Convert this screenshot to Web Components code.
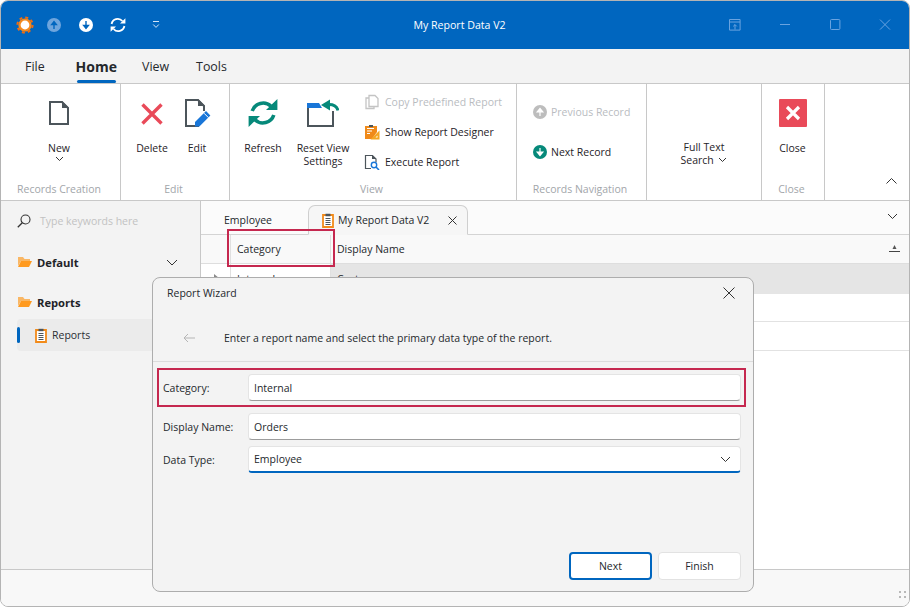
<!DOCTYPE html>
<html>
<head>
<meta charset="utf-8">
<title>My Report Data V2</title>
<style>
  html, body { margin: 0; padding: 0; background: #fff; }
  body { font: 10.5px "Open Sans", "Liberation Sans", sans-serif; color: #1f2328; }
  svg { display: block; }
</style>
</head>
<body>

<app-window>
  <title-bar slot="top" caption="My Report Data V2">
    <svg slot="left" width="18" height="18" viewBox="0 0 18 18" style="margin-right:-4px">
      <circle cx="9" cy="9" r="7.6" fill="none" stroke="#f26c0d" stroke-width="2" stroke-dasharray="3 2.97"/>
      <circle cx="9" cy="9" r="6.6" fill="#f58a1f"/>
      <circle cx="9" cy="9" r="4.4" fill="#fff"/>
    </svg>
    <svg slot="left" width="16" height="16" viewBox="0 0 16 16">
      <circle cx="8" cy="8" r="7" fill="#6ea5dd"/>
      <path d="M8 12V6M5.6 7.6 8 4.6l2.4 3z" fill="#0066bf" stroke="#0066bf" stroke-width="1.4"/>
    </svg>
    <svg slot="left" width="16" height="16" viewBox="0 0 16 16">
      <circle cx="8" cy="8" r="7" fill="#fff"/>
      <path d="M8 4v6M5.6 8.4 8 11.4l2.4-3z" fill="#0066bf" stroke="#0066bf" stroke-width="1.4"/>
    </svg>
    <svg slot="left" width="16" height="16" viewBox="0 0 16 16">
      <path d="M1.6 7A6.2 6.2 0 0 1 12.4 4M14.4 9A6.2 6.2 0 0 1 3.600 12" fill="none" stroke="#fff" stroke-width="1.8"/>
      <path d="M10 6.600h5.400V1.200zM6 9.400H.6v5.400z" fill="#fff"/>
    </svg>
    <svg slot="left" width="16" height="16" viewBox="0 0 16 16" style="margin-left:6px">
      <path d="M5 4.500h6M5.200 7.500 8 10.400l2.800-2.900" fill="none" stroke="#d5e5f6" stroke-width="1"/>
    </svg>

    <svg slot="right" width="12" height="12" viewBox="0 0 12 12">
      <path d="M.5.5h10.600v10.600H.5zM.5 3h10.600M6 10.500V5.600M4.200 7.400 6 5.600l1.800 1.800" fill="none" stroke="#69a3e0"/>
    </svg>
    <svg slot="right" width="12" height="12" viewBox="0 0 12 12"><path d="M1 5.500h10" stroke="#69a3e0"/></svg>
    <svg slot="right" width="12" height="12" viewBox="0 0 12 12"><rect x="1.500" y=".5" width="9.400" height="10" rx="1" fill="none" stroke="#69a3e0"/></svg>
    <svg slot="right" width="12" height="12" viewBox="0 0 12 12"><path d="M1 .6 11 10.600M11 .6 1 10.600" stroke="#69a3e0"/></svg>
  </title-bar>

  <menu-tabs slot="top">
    <menu-tab style="margin-left:24px">File</menu-tab>
    <menu-tab active style="margin-left:31px">Home</menu-tab>
    <menu-tab style="margin-left:25px">View</menu-tab>
    <menu-tab style="margin-left:27px">Tools</menu-tab>
  </menu-tabs>

  <ribbon-bar slot="top">
    <ribbon-group label="Records Creation" style="width:120px">
      <large-button style="width:116px">
        <svg slot="icon" width="24" height="32" viewBox="0 0 24 32">
          <path d="M3 5h12l6 6v16H3z" fill="#fff" stroke="#4c555b" stroke-width="2"/>
          <path d="M15 4l7 7h-7z" fill="#4c555b"/>
        </svg>
        New
        <svg slot="after" width="9" height="6" viewBox="0 0 9 6"><path d="M1 1l3.500 3.500L8 1" fill="none" stroke="#333"/></svg>
      </large-button>
    </ribbon-group>

    <ribbon-group label="Edit" style="width:109px">
      <large-button style="width:44px;margin-left:9px">
        <svg slot="icon" width="24" height="32" viewBox="0 0 24 32">
          <path d="M2.500 7.500l19 19M21.500 7.500l-19 19" stroke="#e94a59" stroke-width="3.400"/>
        </svg>
        Delete
      </large-button>
      <large-button style="width:44px;margin-left:1px">
        <svg slot="icon" width="28" height="32" viewBox="0 0 28 32">
          <path d="M16 29H3V3h12l6 6v5" fill="none" stroke="#4c555b" stroke-width="2"/>
          <path d="M15 2l7 7h-7z" fill="#4c555b"/>
          <path d="M12 29.500v-4.400l11-11 4.400 4.400-11 11z" fill="#1976d8"/>
          <path d="M21 16.200l4.400 4.400" stroke="#fff"/>
        </svg>
        Edit
      </large-button>
    </ribbon-group>

    <ribbon-group label="View" style="width:287px">
      <large-button style="width:46px;margin-left:10px">
        <svg slot="icon" width="30" height="32" viewBox="0 0 30 32">
          <path d="M4.200 14A11.500 11.500 0 0 1 23 9.200M25.800 18A11.500 11.500 0 0 1 7 22.800" fill="none" stroke="#06897a" stroke-width="3.600"/>
          <path d="M18 13h11.400V2zM12 19H.6v11z" fill="#06897a"/>
        </svg>
        Refresh
      </large-button>
      <large-button style="width:66px;margin-left:4px">
        <svg slot="icon" width="32" height="32" viewBox="0 0 32 32">
          <path d="M1 11v18h25V14" fill="none" stroke="#4c555b" stroke-width="2"/>
          <path d="M0 6h12l3 5H0z" fill="#1976d8"/>
          <path d="M22 7.500c5 0 8 2 9 6" fill="none" stroke="#06897a" stroke-width="3"/>
          <path d="M23 2.500v11L14 8z" fill="#06897a"/>
        </svg>
        Reset View<br>Settings
      </large-button>
      <small-stack gap="30" style="margin-left:8px;margin-top:10px">
        <small-button disabled>
          <svg slot="icon" width="16" height="16" viewBox="0 0 16 16">
            <path d="M5 1.500h6l3 3v8H5zM5 4H2v10.500h8v-2" fill="#fff" stroke="#c4c4c4"  stroke-width="1.300"/>
          </svg>
          Copy Predefined Report
        </small-button>
        <small-button>
          <svg slot="icon" width="16" height="16" viewBox="0 0 16 16">
            <path d="M1 2h12v6L8 15H1z" fill="#f08a1a"/>
            <path d="M3 4.500h7M3 7h5M3 9.500h3" stroke="#fff" stroke-width="1.200"/>
            <path d="M5 1h4v2H5z" fill="#4c555b"/>
            <path d="M15.500 6.500v9h-9z" fill="#f5a623"/>
            <path d="M13.500 11.500v2h-2z" fill="#fff"/>
          </svg>
          Show Report Designer
        </small-button>
        <small-button>
          <svg slot="icon" width="16" height="16" viewBox="0 0 16 16">
            <path d="M7 14.500H1.500v-13h7l3.500 3.500v3" fill="none" stroke="#4c555b" stroke-width="1.200"/>
            <path d="M8 1l4 4H8z" fill="#4c555b"/>
            <circle cx="10" cy="11" r="2.700" fill="none" stroke="#1976d8" stroke-width="1.400"/>
            <path d="M12 13l3 3" stroke="#1976d8" stroke-width="1.600"/>
          </svg>
          Execute Report
        </small-button>
      </small-stack>
    </ribbon-group>

    <ribbon-group label="Records Navigation" style="width:130px">
      <small-stack gap="40" style="margin-left:15px;margin-top:20px">
        <small-button disabled narrow>
          <svg slot="icon" width="16" height="16" viewBox="0 0 16 16">
            <circle cx="8" cy="8" r="7" fill="#bdbdbd"/>
            <path d="M8 12V6.500M5.200 7.800 8 4.500l2.800 3.300z" fill="#fff" stroke="#fff" stroke-width="1.200"/>
          </svg>
          Previous Record
        </small-button>
        <small-button narrow>
          <svg slot="icon" width="16" height="16" viewBox="0 0 16 16">
            <circle cx="8" cy="8" r="7" fill="#06897a"/>
            <path d="M8 4v5.500M5.200 8.200 8 11.500l2.800-3.300z" fill="#fff" stroke="#fff" stroke-width="1.200"/>
          </svg>
          Next Record
        </small-button>
      </small-stack>
    </ribbon-group>

    <ribbon-group style="width:115px">
      <large-button text-only style="width:100%">
        Full Text<br>Search<svg slot="inline" width="9" height="6" viewBox="0 0 9 6" style="display:inline-block;margin-left:2px;vertical-align:1px"><path d="M1 1l3.500 3.500L8 1" fill="none" stroke="#333"/></svg>
      </large-button>
    </ribbon-group>

    <ribbon-group label="Close" style="width:63px">
      <large-button style="width:61px">
        <svg slot="icon" width="28" height="32" viewBox="0 0 28 32">
          <rect y="2" width="28" height="28" rx="1" fill="#e94a59"/>
          <path d="M8 10l12 12M20 10 8 22" stroke="#fff" stroke-width="3.200"/>
        </svg>
        Close
      </large-button>
    </ribbon-group>

    <svg style="margin:94px 0 0 61px" width="11" height="6" viewBox="0 0 11 6"><path d="M.5 5.500l5-5 5 5" fill="none" stroke="#333"/></svg>
  </ribbon-bar>

  <nav-pane slot="left">
    <nav-search placeholder="Type keywords here"></nav-search>
    <nav-header label="Default" expandable style="margin-top:23px"></nav-header>
    <nav-header label="Reports" style="margin-top:20px"></nav-header>
    <nav-item label="Reports" selected style="margin-top:7px"></nav-item>
  </nav-pane>

  <doc-area slot="right">
    <doc-tabs>
      <doc-tab>Employee</doc-tab>
      <doc-tab active>My Report Data V2</doc-tab>
    </doc-tabs>
    <data-grid></data-grid>
  </doc-area>

  <status-bar slot="bottom"></status-bar>

  <highlight-box slot="over" style="left:226px;top:228px;width:104px;height:34px"></highlight-box>

  <report-dialog slot="over" caption="Report Wizard" hint="Enter a report name and select the primary data type of the report.">
    <form-row label="Category:" value="Internal"></form-row>
    <form-row label="Display Name:" value="Orders" style="margin-top:12px"></form-row>
    <form-row label="Data Type:" value="Employee" combo style="margin-top:6px"></form-row>
    <highlight-box style="left:4px;top:90px;width:585px;height:35px"></highlight-box>
  </report-dialog>
</app-window>

<script>
// small base class, every element below just gives its markup
class ShadowElement extends HTMLElement {
  constructor() {
    super();
    this.shadowDOM = this.attachShadow({mode: 'open'});
  }

  connectedCallback() {
    this.shadowDOM.innerHTML = this.render();
  }
}

class AppWindow extends ShadowElement {
  render() {
    return `
      <style>
        :host {
          display: flex;
          flex-direction: column;
          position: relative;
          box-sizing: border-box;
          width: 910px;
          height: 607px;
          border: 1px solid #b4b4b4;
          border-radius: 8px;
          overflow: hidden;
          background: #fff;
        }
        .main { flex: 1; display: flex; min-height: 0; }
      </style>
      <slot name="top"></slot>
      <div class="main">
        <slot name="left"></slot>
        <slot name="right"></slot>
      </div>
      <slot name="bottom"></slot>
      <slot name="over"></slot>
    `;
  }
}

class TitleBar extends ShadowElement {
  render() {
    return `
      <style>
        :host {
          display: flex;
          align-items: center;
          position: relative;
          flex: none;
          height: 48px;
          background: #0066bf;
          color: #fff;
        }
        .left { display: flex; align-items: center; gap: 16px; margin-left: 15px; }
        .caption { flex: 1; text-align: center; padding-left: 26px; font-size: 10.6px; }
        .right { display: flex; align-items: center; gap: 38px; margin-right: 18px; }
      </style>
      <div class="left"><slot name="left"></slot></div>
      <div class="caption">${this.getAttribute('caption')}</div>
      <div class="right"><slot name="right"></slot></div>
    `;
  }
}

class MenuTabs extends ShadowElement {
  render() {
    return `
      <style>
        :host {
          display: flex;
          flex: none;
          box-sizing: border-box;
          height: 35px;
          background: #f3f3f3;
          border-bottom: 1px solid #c8c8c8;
        }
      </style>
      <slot></slot>
    `;
  }
}

class MenuTab extends ShadowElement {
  render() {
    return `
      <style>
        :host {
          display: block;
          position: relative;
          height: 34px;
          line-height: 35px;
          font-size: 12.4px;
          color: #24282c;
        }
        :host([active]) { font-weight: 700; font-size: 14px; }
        :host([active])::after {
          content: "";
          position: absolute;
          left: 1px;
          right: 1px;
          bottom: 0;
          height: 3px;
          border-radius: 2px;
          background: #0066bf;
        }
      </style>
      <slot></slot>
    `;
  }
}

class RibbonBar extends ShadowElement {
  render() {
    return `
      <style>
        :host {
          display: flex;
          flex: none;
          box-sizing: border-box;
          height: 117px;
          background: #fff;
          border-bottom: 1px solid #c8c8c8;
        }
      </style>
      <slot></slot>
    `;
  }
}

class RibbonGroup extends ShadowElement {
  render() {
    return `
      <style>
        :host {
          display: flex;
          flex-direction: column;
          flex: none;
          box-sizing: border-box;
          height: 116px;
          border-right: 1px solid #c8c8c8;
        }
        .content { flex: 1; display: flex; align-items: flex-start; }
        .label { height: 22px; line-height: 22px; padding-right: 3px; text-align: center; color: #a2a6aa; }
      </style>
      <div class="content"><slot></slot></div>
      <div class="label">${this.getAttribute('label') || ''}</div>
    `;
  }
}

class LargeButton extends ShadowElement {
  render() {
    return `
      <style>
        :host {
          display: flex;
          flex-direction: column;
          align-items: center;
          flex: none;
          padding-top: 13px;
          text-align: center;
          line-height: 13px;
          color: #1f2328;
        }
        :host([text-only]) { padding-top: 57px; }
        .icon { display: flex; justify-content: center; height: 32px; margin-bottom: 13px; }
        :host([text-only]) .icon { display: none; }
        .after { margin-top: 1px; }
        .text { white-space: nowrap; }
      </style>
      <div class="icon"><slot name="icon"></slot></div>
      <div class="text"><slot></slot><slot name="inline"></slot></div>
      <div class="after"><slot name="after"></slot></div>
    `;
  }
}

class SmallStack extends ShadowElement {
  render() {
    return `
      <style>
        :host { display: flex; flex-direction: column; gap: ${Number(this.getAttribute('gap')) - 16}px; }
      </style>
      <slot></slot>
    `;
  }
}

class SmallButton extends ShadowElement {
  render() {
    return `
      <style>
        :host {
          display: flex;
          align-items: center;
          gap: 5px;
          height: 16px;
          white-space: nowrap;
          color: #1f2328;
        }
        :host([narrow]) { gap: 3px; }
        :host([disabled]) { color: #b9bcbf; }
      </style>
      <slot name="icon"></slot>
      <span><slot></slot></span>
    `;
  }
}

class NavPane extends ShadowElement {
  render() {
    return `
      <style>
        :host {
          display: block;
          box-sizing: border-box;
          width: 200px;
          height: 100%;
          padding: 12px 0 0 16px;
          background: #f3f3f3;
          border-right: 1px solid #c8c8c8;
        }
      </style>
      <slot></slot>
    `;
  }
}

class NavSearch extends ShadowElement {
  render() {
    return `
      <style>
        :host { display: flex; align-items: center; gap: 9px; height: 16px; color: #c2c2c2; }
      </style>
      <svg width="14" height="14" viewBox="0 0 14 14">
        <circle cx="8.500" cy="5.500" r="4.500" fill="none" stroke="#333" stroke-width="1.100"/>
        <path d="M5.300 8.700.8 13.200" stroke="#333" stroke-width="1.300"/>
      </svg>
      <span>${this.getAttribute('placeholder')}</span>
    `;
  }
}

class NavHeader extends ShadowElement {
  render() {
    return `
      <style>
        :host {
          display: flex;
          align-items: center;
          gap: 5px;
          height: 20px;
          padding-left: 1px;
          font-size: 11.2px;
          font-weight: 700;
          color: #1f2328;
        }
        svg.chevron { margin-left: auto; margin-right: 22px; }
      </style>
      <svg width="14" height="12" viewBox="0 0 14 12">
        <path d="M0 1h5l1.500 2H12v2H3L0 10z" fill="#f9b765"/>
        <path d="M3 5h11l-3 6H0z" fill="#ff9a1f"/>
      </svg>
      <span>${this.getAttribute('label')}</span>
      ${this.hasAttribute('expandable') ? `<svg class="chevron" width="12" height="7" viewBox="0 0 12 7"><path d="M1 1l5 5 5-5" fill="none" stroke="#333"/></svg>` : ''}
    `;
  }
}

class NavItem extends ShadowElement {
  render() {
    return `
      <style>
        :host {
          display: flex;
          align-items: center;
          position: relative;
          gap: 5px;
          height: 32px;
          padding-left: 18px;
          border-radius: 4px;
          background: #ebebeb;
          color: #2a2e33;
        }
        :host::before {
          content: "";
          position: absolute;
          left: 0;
          top: 8px;
          width: 3px;
          height: 16px;
          border-radius: 2px;
          background: #0066bf;
        }
      </style>
      <report-icon></report-icon>
      <span>${this.getAttribute('label')}</span>
    `;
  }
}

class ReportIcon extends ShadowElement {
  render() {
    return `
      <style>:host { display: block; flex: none; width: 12px; height: 15px; }</style>
      <svg width="12" height="15" viewBox="0 0 12 15">
        <path d="M1 2h10v12H1z" fill="#fff" stroke="#f28b1a" stroke-width="1.800"/>
        <path d="M3.500 .8h5v2.400h-5z" fill="#4c555b"/>
        <path d="M3.500 5.500h5M3.500 7.500h5M3.500 9.500h5M3.500 11.500h5" stroke="#4c555b"/>
      </svg>
    `;
  }
}

class DocArea extends ShadowElement {
  render() {
    return `
      <style>
        :host { display: flex; flex-direction: column; width: 708px; height: 100%; background: #fff; }
      </style>
      <slot></slot>
    `;
  }
}

class DocTabs extends ShadowElement {
  render() {
    return `
      <style>
        :host {
          display: flex;
          align-items: flex-end;
          flex: none;
          position: relative;
          box-sizing: border-box;
          height: 34px;
          padding-left: 23px;
          background: #fbfbfb;
          border-bottom: 1px solid #d4d4d4;
        }
        svg { position: absolute; right: 11px; top: 12px; }
      </style>
      <slot></slot>
      <svg width="11" height="7" viewBox="0 0 11 7"><path d="M1 1l4.500 4.500L10 1" fill="none" stroke="#333"/></svg>
    `;
  }
}

class DocTab extends ShadowElement {
  render() {
    const active = this.hasAttribute('active');
    return `
      <style>
        :host {
          display: flex;
          align-items: center;
          box-sizing: border-box;
          height: 30px;
          margin-bottom: -1px;
          color: #24282c;
        }
        :host([active]) {
          width: 160px;
          margin-left: 36px;
          padding-left: 13px;
          gap: 4px;
          background: #f6f6f6;
          border: 1px solid #cfcfcf;
          border-bottom-color: #f6f6f6;
          border-radius: 7px 7px 0 0;
        }
        svg { margin-left: auto; margin-right: 10px; }
      </style>
      ${active ? '<report-icon></report-icon>' : ''}
      <span><slot></slot></span>
      ${active ? `<svg width="9" height="9" viewBox="0 0 9 9"><path d="M.5.5l8 8M8.500.5l-8 8" stroke="#333"/></svg>` : ''}
    `;
  }
}

class DataGrid extends ShadowElement {
  render() {
    return `
      <style>
        :host { display: block; position: relative; flex: 1; color: #24282c; }
        .row { display: grid; grid-template-columns: 30px 100px 1fr; height: 29px; border-bottom: 1px solid #e2e2e2; box-sizing: border-box; }
        .head { background: #f9f9f9; border-bottom: 1px solid #dedede; }
        .cell { padding-left: 6px; line-height: 30px; border-right: 1px solid #e0e0e0; }
        .head .cell { line-height: 28px; }
        .cell:last-child { border-right: 0; }
        .sel .cell:last-child { background: #e5e5e5; }
        .marker { padding: 0; }
        .marker i { display: block; width: 0; height: 0; margin: 10px 0 0 13px; border-left: 5px solid #8a8a8a; border-top: 4px solid transparent; border-bottom: 4px solid transparent; }
        svg { position: absolute; right: 9px; top: 10px; }
      </style>
      <div class="row head">
        <div class="cell"></div><div class="cell">Category</div><div class="cell">Display Name</div>
      </div>
      <svg width="11" height="7" viewBox="0 0 11 7"><path d="M5.500 0 7.500 4h-4z" fill="#555"/><path d="M0 6.500h11" stroke="#444"/></svg>
      <div class="row sel"><div class="cell marker"><i></i></div><div class="cell">Internal</div><div class="cell">Customers</div></div>
      <div class="row"><div class="cell"></div><div class="cell"></div><div class="cell"></div></div>
      <div class="row"><div class="cell"></div><div class="cell"></div><div class="cell"></div></div>
    `;
  }
}

class StatusBar extends ShadowElement {
  render() {
    return `
      <style>
        :host {
          display: block;
          position: relative;
          flex: none;
          box-sizing: border-box;
          height: 37px;
          background: #f8f8f8;
          border-top: 1px solid #c8c8c8;
        }
        svg { position: absolute; right: 3px; bottom: 8px; }
      </style>
      <svg width="7" height="7" viewBox="0 0 7 7" fill="#b8b8b8">
        <rect width="2" height="2"/><rect x="5" width="2" height="2"/>
        <rect y="5" width="2" height="2"/><rect x="5" y="5" width="2" height="2"/>
      </svg>
    `;
  }
}

class HighlightBox extends ShadowElement {
  render() {
    return `
      <style>
        :host {
          display: block;
          position: absolute;
          border: 2px solid #c5284f;
          pointer-events: none;
        }
      </style>
    `;
  }
}

class ReportDialog extends ShadowElement {
  render() {
    return `
      <style>
        :host {
          display: flex;
          flex-direction: column;
          position: absolute;
          left: 151px;
          top: 276px;
          box-sizing: border-box;
          width: 602px;
          height: 315px;
          background: #f3f3f3;
          border: 1px solid #adadad;
          border-radius: 8px;
          color: #24282c;
        }
        .title { display: flex; align-items: center; justify-content: space-between; height: 30px; padding: 0 18px 0 14px; }
        .hint { display: flex; align-items: center; gap: 29px; box-sizing: border-box; height: 54px; padding: 6px 0 0 30px; border-bottom: 1px solid #dcdcdc; }
        .form { padding: 12px 12px 0 10px; }
        .actions { display: flex; justify-content: flex-end; gap: 6px; margin-top: auto; padding: 0 12px 11px 0; }
        button {
          box-sizing: border-box;
          width: 83px;
          height: 28px;
          font: inherit;
          color: inherit;
          background: #fff;
          border: 1px solid #e2e2e2;
          border-radius: 4px;
        }
        button.default { border: 2px solid #0066bf; }
      </style>
      <div class="title">
        <span>${this.getAttribute('caption')}</span>
        <svg width="12" height="12" viewBox="0 0 12 12"><path d="M.5.5l11 11M11.500.5l-11 11" stroke="#333"/></svg>
      </div>
      <div class="hint">
        <svg width="12" height="10" viewBox="0 0 12 10"><path d="M12 5H1M5 1 1 5l4 4" fill="none" stroke="#b5b5b5"/></svg>
        <span>${this.getAttribute('hint')}</span>
      </div>
      <div class="form"><slot></slot></div>
      <div class="actions">
        <button class="default">Next</button>
        <button>Finish</button>
      </div>
    `;
  }
}

class FormRow extends ShadowElement {
  render() {
    const combo = this.hasAttribute('combo');
    return `
      <style>
        :host { display: grid; grid-template-columns: 85px 493px; align-items: center; height: 27px; }
        .box {
          display: flex;
          align-items: center;
          justify-content: space-between;
          box-sizing: border-box;
          height: 27px;
          padding: 0 9px 0 5px;
          background: #fff;
          border: 1px solid #e4e4e4;
          border-bottom: 1px solid #9c9c9c;
          border-radius: 4px;
        }
        :host([combo]) .box { border-bottom: 2px solid #0066bf; }
      </style>
      <span>${this.getAttribute('label')}</span>
      <div class="box">
        <span>${this.getAttribute('value')}</span>
        ${combo ? `<svg width="11" height="7" viewBox="0 0 11 7"><path d="M1 1l4.500 4.500L10 1" fill="none" stroke="#333"/></svg>` : ''}
      </div>
    `;
  }
}

customElements.define('app-window', AppWindow);
customElements.define('title-bar', TitleBar);
customElements.define('menu-tabs', MenuTabs);
customElements.define('menu-tab', MenuTab);
customElements.define('ribbon-bar', RibbonBar);
customElements.define('ribbon-group', RibbonGroup);
customElements.define('large-button', LargeButton);
customElements.define('small-stack', SmallStack);
customElements.define('small-button', SmallButton);
customElements.define('nav-pane', NavPane);
customElements.define('nav-search', NavSearch);
customElements.define('nav-header', NavHeader);
customElements.define('nav-item', NavItem);
customElements.define('report-icon', ReportIcon);
customElements.define('doc-area', DocArea);
customElements.define('doc-tabs', DocTabs);
customElements.define('doc-tab', DocTab);
customElements.define('data-grid', DataGrid);
customElements.define('status-bar', StatusBar);
customElements.define('highlight-box', HighlightBox);
customElements.define('report-dialog', ReportDialog);
customElements.define('form-row', FormRow);
</script>
</body>
</html>
